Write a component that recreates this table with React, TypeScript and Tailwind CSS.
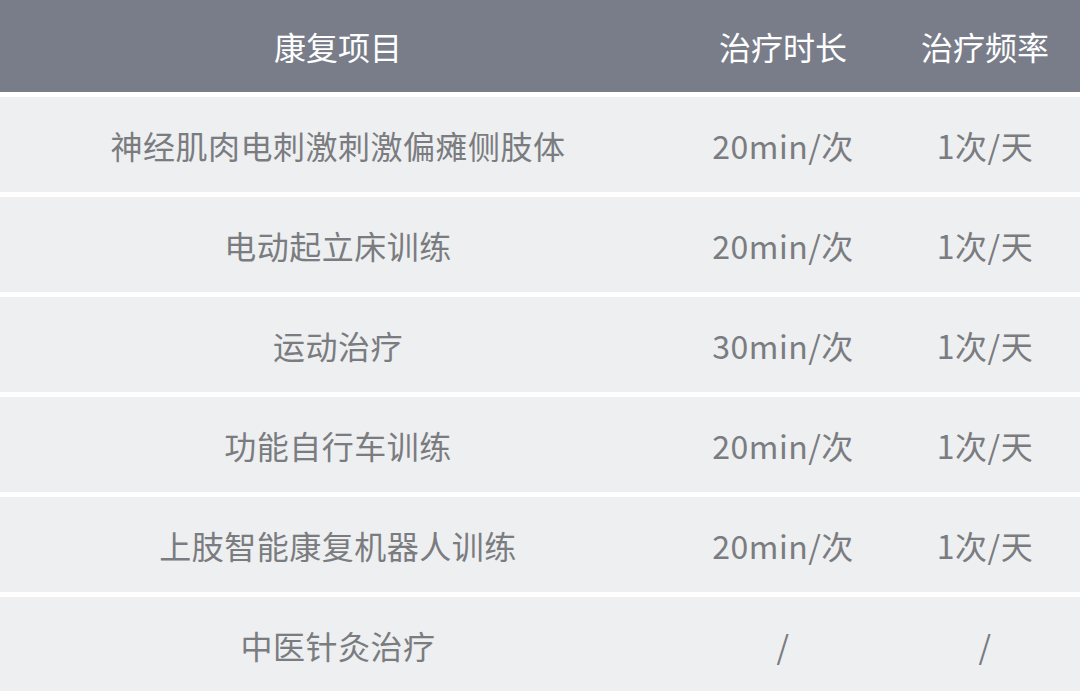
const rows = [
  { name: '神经肌肉电刺激刺激偏瘫侧肢体', time: '20min/次', freq: '1次/天' },
  { name: '电动起立床训练', time: '20min/次', freq: '1次/天' },
  { name: '运动治疗', time: '30min/次', freq: '1次/天' },
  { name: '功能自行车训练', time: '20min/次', freq: '1次/天' },
  { name: '上肢智能康复机器人训练', time: '20min/次', freq: '1次/天' },
  { name: '中医针灸治疗', time: '/', freq: '/' },
];

export default function App() {
  return (
    <div className="flex h-[691px] w-[1080px] flex-col gap-[5px] overflow-hidden bg-white font-['Noto_Sans_CJK_SC',sans-serif] text-[32px]">
      <div className="grid h-[92px] shrink-0 grid-cols-[676px_214px_190px] items-center bg-[#797d89] text-white">
        <span className="text-center">康复项目</span>
        <span className="text-center">治疗时长</span>
        <span className="text-center">治疗频率</span>
      </div>
      {rows.map((r) => (
        <div
          key={r.name}
          className="grid h-[95px] shrink-0 grid-cols-[676px_214px_190px] items-center bg-[#eeeff1] tracking-[0.5px] text-[#7a7c80]"
        >
          <span className="text-center">{r.name}</span>
          <span className="text-center">{r.time}</span>
          <span className="text-center">{r.freq}</span>
        </div>
      ))}
    </div>
  );
}
